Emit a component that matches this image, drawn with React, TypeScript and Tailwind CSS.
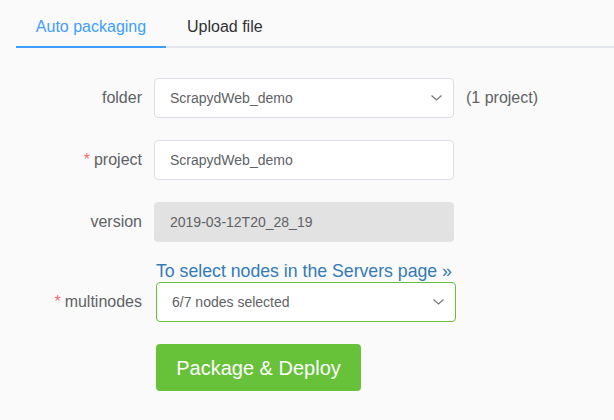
const font = { fontFamily: '"Liberation Sans", Arial, sans-serif' };

function Caret() {
  return (
    <svg width="11" height="6" viewBox="0 0 11 6" className="mr-[-2px]">
      <polyline points="0.5,0.5 5.5,5 10.5,0.5" fill="none" stroke="#7a7a7a" strokeWidth="1.3" />
    </svg>
  );
}

function Label({ text, required }: { text: string; required?: boolean }) {
  return (
    <div className="w-[142px] text-right text-[16px] text-[#606266] shrink-0">
      {required && <span className="text-[#f56c6c] mr-1">*</span>}
      {text}
    </div>
  );
}

export default function App() {
  return (
    <div className="w-[614px] h-[420px] bg-[#fafafa] overflow-hidden" style={font}>
      <div className="flex h-[48px] ml-[16px] border-b-2 border-[#e4e7ed]">
        <div className="w-[150px] -mb-[2px] border-b-2 border-[#409eff] pt-[15px] text-center text-[16px] text-[#409eff]">
          Auto packaging
        </div>
        <div className="pl-[21px] pt-[15px] text-[16px] text-[#303133]">Upload file</div>
      </div>

      <div className="flex flex-col pt-[30px]">
        <div className="flex items-center h-[40px]">
          <Label text="folder" />
          <div className="ml-[12px] w-[300px] h-[40px] flex items-center justify-between pl-[15px] pr-[13px] bg-white border border-[#dcdfe6] rounded-[4px] text-[14px] text-[#606266]">
            <span>ScrapydWeb_demo</span>
            <Caret />
          </div>
          <span className="ml-[12px] text-[16px] text-[#606266]">(1 project)</span>
        </div>

        <div className="flex items-center h-[40px] mt-[22px]">
          <Label text="project" required />
          <div className="ml-[12px] w-[300px] h-[40px] flex items-center px-[15px] bg-white border border-[#dcdfe6] rounded-[4px] text-[14px] text-[#606266]">
            ScrapydWeb_demo
          </div>
        </div>

        <div className="flex items-center h-[40px] mt-[22px]">
          <Label text="version" />
          <div className="ml-[12px] w-[300px] h-[40px] flex items-center px-[15px] bg-[#e2e2e2] border border-[#e2e2e2] rounded-[4px] text-[14px] text-[#606266]">
            2019-03-12T20_28_19
          </div>
        </div>

        <div className="ml-[156px] mt-[18px] h-[22px] text-[17.7px] leading-[22px] text-[#337ab7]">
          To select nodes in the Servers page »
        </div>

        <div className="flex items-center h-[40px]">
          <Label text="multinodes" required />
          <div className="ml-[14px] w-[300px] h-[40px] flex items-center justify-between pl-[15px] pr-[13px] bg-white border border-[#67c23a] rounded-[4px] text-[14px] text-[#606266]">
            <span>6/7 nodes selected</span>
            <Caret />
          </div>
        </div>

        <div className="ml-[156px] mt-[22px]">
          <button className="w-[205px] h-[47px] bg-[#67c23a] rounded-[4px] text-white text-[20px]">
            Package &amp; Deploy
          </button>
        </div>
      </div>
    </div>
  );
}
